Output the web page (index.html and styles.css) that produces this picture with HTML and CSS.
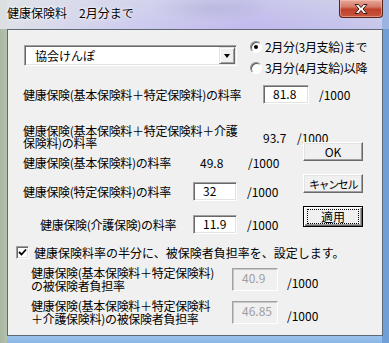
FILE: index.html
```html
<!DOCTYPE html>
<html lang="ja">
<head>
  <meta charset="UTF-8">
  <title>健康保険料</title>
  <link rel="stylesheet" href="styles.css">
</head>
<body>
  <div class="window">
    <div class="titlebar">
      <span class="title">健康保険料　2月分まで</span>
      <button class="close">
        <svg width="14" height="10" viewBox="0 0 14 10">
          <path d="M1 0.5h3.5L7 3.5l2.5-3h3.5L9 5l4 4.5H9.5L7 6.5l-2.5 3H1L5 5z" fill="#fff" stroke="#3a1a14" stroke-width="1"/>
        </svg>
      </button>
    </div>

    <div class="client">
      <div class="top">
        <div class="combo">
          <span class="combo-text">協会けんぽ</span>
          <span class="combo-btn"><i class="arrow"></i></span>
        </div>
        <div class="radios">
          <label class="radio"><span class="dot checked"></span>2月分(3月支給)まで</label>
          <label class="radio"><span class="dot"></span>3月分(4月支給)以降</label>
        </div>
      </div>

      <div class="row row1">
        <span class="label w240">健康保険(基本保険料＋特定保険料)の料率</span>
        <span class="edit w46">81.8</span>
        <span class="unit">/1000</span>
      </div>

      <div class="row row2">
        <span class="label w240 two">健康保険(基本保険料＋特定保険料＋介護<br>保険料)の料率</span>
        <span class="value w24">93.7</span>
        <span class="unit">/1000</span>
      </div>

      <div class="middle">
        <div class="rates">
          <div class="row row3">
            <span class="label w177">健康保険(基本保険料)の料率</span>
            <span class="value w38">49.8</span>
            <span class="unit">/1000</span>
          </div>
          <div class="row row4">
            <span class="label w170">健康保険(特定保険料)の料率</span>
            <span class="edit w44">32</span>
            <span class="unit">/1000</span>
          </div>
          <div class="row row5">
            <span class="label w153">健康保険(介護保険)の料率</span>
            <span class="edit w44">11.9</span>
            <span class="unit">/1000</span>
          </div>
        </div>
        <div class="buttons">
          <button class="btn">OK</button>
          <button class="btn narrow">キャンセル</button>
          <button class="btn default"><span class="focus">適用</span></button>
        </div>
      </div>

      <label class="check">
        <span class="box">
          <svg width="9" height="9" viewBox="0 0 9 9"><path d="M1 4l2.5 2.5L8 1.5" fill="none" stroke="#000" stroke-width="1.8"/></svg>
        </span>
        健康保険料率の半分に、被保険者負担率を、設定します。
      </label>

      <div class="row sub sub1">
        <span class="label w201 two">健康保険(基本保険料＋特定保険料)<br>の被保険者負担率</span>
        <span class="edit disabled">40.9</span>
        <span class="unit">/1000</span>
      </div>
      <div class="row sub sub2">
        <span class="label w201 two">健康保険(基本保険料＋特定保険料<br>＋介護保険料)の被保険者負担率</span>
        <span class="edit disabled">46.85</span>
        <span class="unit">/1000</span>
      </div>
    </div>
  </div>
</body>
</html>
```

FILE: styles.css
```css
body {
  margin: 0;
  width: 389px;
  height: 343px;
  overflow: hidden;
  font-family: "Noto Sans CJK JP", sans-serif;
  font-size: 12px;
  color: #000;
}

.window {
  width: 389px;
  height: 343px;
  display: flex;
  flex-direction: column;
  background:
    radial-gradient(ellipse 60px 14px at 210px 8px, rgba(120, 130, 150, 0.35), transparent),
    radial-gradient(ellipse 30px 10px at 290px 36px, rgba(150, 150, 200, 0.3), transparent),
    linear-gradient(90deg, #a9b8a2 0, #b4c0ac 7px, transparent 7px, transparent 382px, #6f9fd6 382px),
    linear-gradient(180deg, #d9dde6 0, #c7c4ec 30px, #bcc8c0 200px, #a8b89e 330px, #9cc2ea 336px, #8ab6e6 343px);
}

.titlebar {
  height: 29px;
  display: flex;
  justify-content: space-between;
  align-items: flex-start;
  padding-left: 7px;
  background: linear-gradient(90deg, rgba(225, 228, 232, 0.9) 0, rgba(210, 208, 240, 0.6) 130px, rgba(185, 175, 240, 0.5) 250px, rgba(200, 200, 235, 0.5) 389px);
}

.title {
  margin-top: 6px;
  font-size: 12px;
  line-height: 14px;
  text-shadow: 0 0 4px #fff, 0 0 2px #fff;
}

.close {
  width: 44px;
  height: 18px;
  margin-right: 6px;
  padding: 0;
  display: flex;
  align-items: center;
  justify-content: center;
  border: 1px solid #5a2218;
  border-top: none;
  border-radius: 0 0 4px 4px;
  background: linear-gradient(180deg, #e9a89a 0, #d47a68 40%, #c0402a 55%, #c8563e 100%);
  box-shadow: inset 0 0 0 1px rgba(255, 200, 190, 0.5);
}

.client {
  flex: 1;
  margin: 0 6px 7px 7px;
  background: #f0f0f0;
  border: 1px solid #5d6a76;
  display: flex;
  flex-direction: column;
}

.top {
  display: flex;
  padding-top: 6px;
  height: 42px;
}

.combo {
  margin: 9px 0 0 16px;
  width: 213px;
  height: 21px;
  box-sizing: border-box;
  display: flex;
  align-items: center;
  justify-content: space-between;
  background: #fff;
  border: 1px solid;
  border-color: #a0a0a0 #fff #fff #a0a0a0;
  box-shadow: inset 1px 1px #696969, inset -1px -1px #e3e3e3;
}

.combo-text {
  padding-left: 10px;
}

.combo-btn {
  width: 16px;
  height: 17px;
  margin-right: 1px;
  box-sizing: border-box;
  display: flex;
  align-items: center;
  justify-content: center;
  background: #f0f0f0;
  border: 1px solid;
  border-color: #e3e3e3 #696969 #696969 #e3e3e3;
  box-shadow: inset 1px 1px #fff, inset -1px -1px #a0a0a0;
}

.arrow {
  width: 0;
  height: 0;
  border-left: 3.5px solid transparent;
  border-right: 3.5px solid transparent;
  border-top: 4px solid #000;
}

.radios {
  margin-left: 13px;
  display: flex;
  flex-direction: column;
  letter-spacing: -0.3px;
}

.radio {
  height: 21px;
  display: flex;
  align-items: center;
  gap: 3px;
}

.dot {
  width: 12px;
  height: 12px;
  box-sizing: border-box;
  border-radius: 50%;
  border: 1px solid;
  border-color: #8a8a8a #fff #fff #8a8a8a;
  box-shadow: inset 1px 1px #5a5a5a;
  background: #fff;
  display: flex;
  align-items: center;
  justify-content: center;
}

.dot.checked::after {
  content: "";
  width: 4px;
  height: 4px;
  border-radius: 50%;
  background: #000;
}

.row {
  display: flex;
  align-items: center;
}

.label {
  flex: none;
  white-space: nowrap;
  letter-spacing: -0.3px;
}

.two {
  line-height: 12.5px;
}

.w240 { width: 240px; }
.w177 { width: 177px; }
.w170 { width: 170px; }
.w153 { width: 153px; }
.w201 { width: 201px; }
.w24 { width: 24px; }
.w38 { width: 38px; }
.w44 { width: 44px; }
.w46 { width: 46px; }

.edit {
  flex: none;
  height: 19px;
  box-sizing: border-box;
  padding-left: 9px;
  line-height: 16px;
  background: #fff;
  border: 1px solid;
  border-color: #a0a0a0 #fff #fff #a0a0a0;
  box-shadow: inset 1px 1px #696969, inset -1px -1px #e3e3e3;
}

.edit.disabled {
  width: 46px;
  height: 23px;
  line-height: 18px;
  color: #a0a0a0;
  background: #f0f0f0;
  border-color: #a0a0a0 #fff #fff #a0a0a0;
  box-shadow: inset 1px 1px #c8c8c8;
}

.unit {
  margin-left: 10px;
}

.row1 {
  margin-top: 7px;
  padding-left: 15px;
  height: 19px;
}

.row2 {
  margin-top: 21px;
  padding-left: 15px;
  height: 24px;
}

.middle {
  display: flex;
}

.rates {
  width: 295px;
}

.row3 {
  height: 26px;
  padding-left: 15px;
}

.row4 {
  margin-top: 7px;
  height: 19px;
  padding-left: 15px;
}

.row5 {
  margin-top: 14px;
  height: 19px;
  padding-left: 32px;
}

.buttons {
  margin-top: -7px;
  display: flex;
  flex-direction: column;
  gap: 13px;
}

.btn {
  width: 60px;
  height: 19px;
  padding: 0;
  font-family: inherit;
  font-size: 12px;
  line-height: 14px;
  white-space: nowrap;
  color: #000;
  background: #f0f0f0;
  border: 1px solid;
  border-color: #fff #696969 #696969 #fff;
  box-shadow: inset -1px -1px #a0a0a0, inset 1px 1px #e3e3e3;
}

.btn.narrow {
  font-size: 11px;
  letter-spacing: -1.4px;
}

.btn.default {
  height: 21px;
  border: 1px solid #000;
  box-shadow: inset 1px 1px #fff, inset -1px -1px #696969, inset -2px -2px #a0a0a0;
  display: flex;
  align-items: center;
  justify-content: center;
}

.focus {
  width: 50px;
  height: 13px;
  line-height: 13px;
  border: 1px dotted #000;
}

.check {
  margin-top: 10px;
  height: 16px;
  padding-left: 8px;
  display: flex;
  align-items: center;
  gap: 5px;
}

.box {
  width: 13px;
  height: 13px;
  box-sizing: border-box;
  display: flex;
  align-items: center;
  justify-content: center;
  background: #fff;
  border: 1px solid;
  border-color: #a0a0a0 #fff #fff #a0a0a0;
  box-shadow: inset 1px 1px #696969, inset -1px -1px #e3e3e3;
}

.sub {
  padding-left: 23px;
  height: 23px;
}

.sub1 {
  margin-top: 8px;
}

.sub2 {
  margin-top: 10px;
}

.sub .unit {
  margin-left: 9px;
  margin-top: 6px;
}
```
